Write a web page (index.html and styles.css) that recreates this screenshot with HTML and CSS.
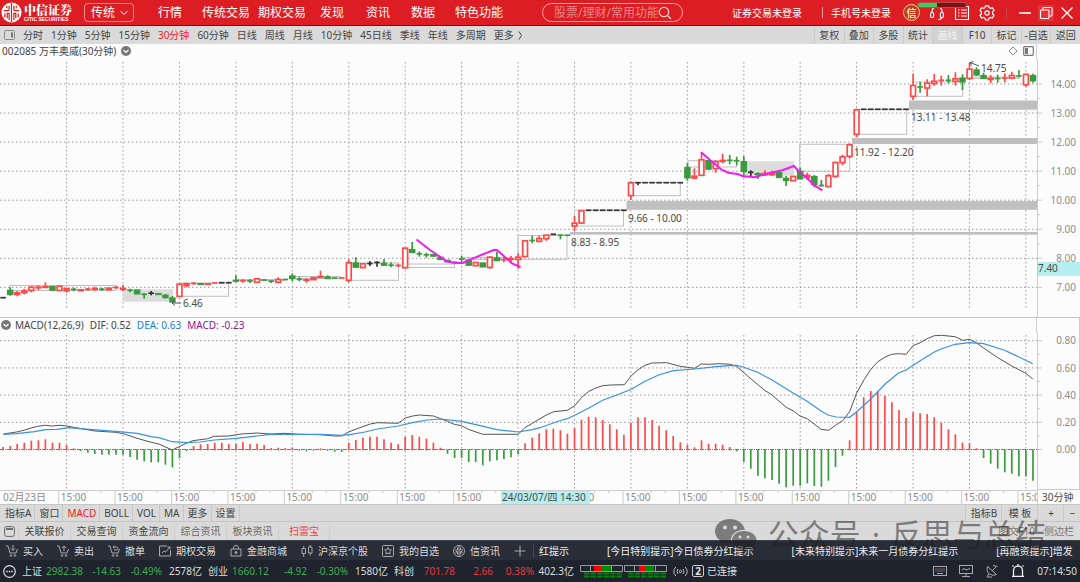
FILE: index.html
```html
<!DOCTYPE html>
<html lang="zh-CN">
<head>
<meta charset="utf-8">
<title>万丰奥威 30分钟</title>
<link rel="stylesheet" href="styles.css">
</head>
<body>
<header class="top">
  <a class="brand" href="#">
    <svg class="brand-mark" viewBox="0 0 22 22" aria-hidden="true"><circle cx="11" cy="11" r="10.5" fill="#fff"/><g fill="none" stroke="#dc1e24" stroke-width="1.3"><path d="M11 1v20M8.5 4v4q0 1-2 1H3M8.500 19v-7h-2v5M13.500 4v4q0 1 2 1H19M13.500 19v-7h2v5M4 12v4M18 12v4M6 4v2.500M16 4v2.500"/></g></svg>
    <span class="brand-text"><b class="brand-cn">中信证券</b><span class="brand-en">CITIC SECURITIES</span></span>
  </a>
  <button class="mode">传统<svg viewBox="0 0 8 6" width="8" height="6"><path d="M.5 1l3.500 3.500L7.500 1" fill="none" stroke="#fff"/></svg></button>
  <nav class="nav">
    <a href="#">行情</a><a href="#">传统交易</a><a href="#">期权交易</a><a href="#">发现</a><a href="#">资讯</a><a href="#">数据</a><a href="#">特色功能</a>
  </nav>
  <label class="search">
    <input type="text" placeholder="股票/理财/常用功能" aria-label="搜索">
    <svg viewBox="0 0 14 14" width="14" height="14"><g fill="none" stroke="#fbd5d5" stroke-width="1.300"><circle cx="6" cy="6" r="4.700"/><path d="M9.500 9.500l3.500 3.500"/></g></svg>
  </label>
  <div class="account">
    <a href="#">证券交易未登录</a><i class="bar"></i><a href="#">手机号未登录</a>
  </div>
  <div class="tools">
    <button class="coin" aria-label="信">信</button>
    <button class="tool" aria-label="客服"><svg viewBox="0 0 16 16"><g fill="none" stroke="#fff" stroke-width="1.200"><path d="M3 8V6.500a5 5 0 0 1 10 0V8M13 12q0 2.500-4 2.500"/><rect x="1.600" y="7.500" width="3" height="5" rx="1.300"/><rect x="11.400" y="7.500" width="3" height="5" rx="1.300"/></g></svg><span class="progress"></span></button>
    <button class="tool" aria-label="列表"><svg viewBox="0 0 16 16"><g fill="none" stroke="#fff" stroke-width="1.100"><path d="M1.500 2.500v12h13v-13h-12"/><path d="M4 5h1.500M7 5h6M4 8h1.500M7 8h6M4 11h1.500M7 11h6"/></g></svg></button>
    <button class="tool" aria-label="设置"><svg viewBox="0 0 16 16"><g fill="none" stroke="#fff" stroke-width="1.200"><path d="M6.500.8h3l.6 1.900 1.300.7 2-.6 1.600 2.600-1.400 1.500v2l1.400 1.500-1.600 2.600-2-.6-1.300.7-.6 1.900h-3l-.6-1.900-1.300-.7-2 .6L1 10.400l1.400-1.500v-2L1 5.400l1.600-2.600 2 .6 1.300-.7z"/><circle cx="8" cy="8" r="2.200"/></g></svg></button>
  </div>
  <i class="bar dim"></i>
  <div class="window">
    <button class="tool" aria-label="最小化"><svg viewBox="0 0 16 16"><path d="M2 8h12" stroke="#fff" stroke-width="1.600"/></svg></button>
    <button class="tool lit" aria-label="还原"><svg viewBox="0 0 16 16"><g fill="none" stroke="#fff" stroke-width="1.100"><rect x="2.500" y="5" width="8.500" height="8.500" rx="1"/><path d="M5 5V3.500q0-1 1-1h7q1 0 1 1V10q0 1-1 1h-2"/></g></svg></button>
    <button class="tool" aria-label="关闭"><svg viewBox="0 0 16 16"><path d="M2.500 2.500l11 11M13.500 2.500l-11 11" stroke="#fff" stroke-width="1.300"/></svg></button>
  </div>
</header>

<div class="periods">
  <svg class="panel-icon" viewBox="0 0 11 10" width="11" height="10"><rect x=".5" y=".5" width="10" height="9" rx="1" fill="none" stroke="#888"/><path d="M7 2.500h2v5H7z" fill="#777"/></svg>
  <button>分时</button><button>1分钟</button><button>5分钟</button><button>15分钟</button><button class="on">30分钟</button><button>60分钟</button><button>日线</button><button>周线</button><button>月线</button><button>10分钟</button><button>45日线</button><button>季线</button><button>年线</button><button>多周期</button><button>更多 <svg viewBox="0 0 5 9" width="5" height="9"><path d="M1 .5l2.500 4L1 8.500" fill="none" stroke="#444"/></svg></button>
  <div class="actions">
    <button>复权</button><button>叠加</button><button>多股</button><button>统计</button><button class="pressed">画线</button><button>F10</button><button>标记</button><button>-自选</button><button>返回</button>
  </div>
</div>

<main class="charts">
  <div class="caption">
    <div class="caption-main">002085 万丰奥威(30分钟)
      <svg viewBox="0 0 10 10" width="10" height="10"><circle cx="5" cy="5" r="5" fill="#777"/><path d="M2.500 4L5 6.500 7.500 4" fill="none" stroke="#fff" stroke-width="1.200"/></svg>
      <svg class="push" viewBox="0 0 10 10" width="10" height="10"><path d="M5 1l4 4-4 4-4-4z" fill="none" stroke="#888"/></svg>
      <svg viewBox="0 0 11 10" width="11" height="10"><rect x=".7" y=".7" width="9.600" height="8.600" rx="1" fill="none" stroke="#777" stroke-width="1.200"/><path d="M2 2h3v6H2z" fill="#777"/></svg>
    </div>
    <div class="caption-side"></div>
  </div>
  <svg class="plot" id="price" viewBox="0 59 1080 259" role="img" aria-label="K线图"></svg>
  <div class="caption">
    <div class="caption-main macd-caption">
      <svg viewBox="0 0 10 10" width="10" height="10"><circle cx="5" cy="5" r="5" fill="#777"/><path d="M2.500 4L5 6.500 7.500 4" fill="none" stroke="#fff" stroke-width="1.200"/></svg>
      <span>MACD(12,26,9)</span><span>DIF: 0.52</span><span class="dea">DEA: 0.63</span><span class="macd">MACD: -0.23</span>
    </div>
    <div class="caption-side boxed"></div>
  </div>
  <svg class="plot" id="macd" viewBox="0 333 1080 157" role="img" aria-label="MACD"></svg>
  <svg class="plot" id="time" viewBox="0 490 1080 14" role="img" aria-label="时间轴"></svg>
</main>

<div class="indicators">
  <button>指标A</button><button>窗口</button><button class="on">MACD</button><button>BOLL</button><button>VOL</button><button>MA</button><button>更多</button><button>设置</button>
  <div class="indicators-end"><button>指标B</button><button>模 板</button><button>+</button><button>−</button></div>
</div>

<div class="news">
  <svg class="news-icon" viewBox="0 0 11 11" width="11" height="11"><rect x=".6" y=".6" width="9.800" height="9.800" rx="2" fill="none" stroke="#666"/><path d="M2 3h7" stroke="#555" stroke-width="1.600"/></svg>
  <button>关联报价</button><button>交易查询</button><button>资金流向</button><button class="soft">综合资讯</button><button class="soft">板块资讯</button><button class="on">扫雷宝</button>
  <div class="news-end"><a href="#">图文F10</a><a href="#">侧边栏</a></div>
</div>

<footer class="bottom">
  <div class="shortcuts">
    <button><svg viewBox="0 0 12 12"><path d="M0 1h2l2 7h6l1.500-4M7 0v5M5 3.500l2 2 2-2"/><circle cx="5" cy="10.500" r=".8"/><circle cx="9" cy="10.500" r=".8"/></svg>买入</button>
    <button><svg viewBox="0 0 12 12"><path d="M0 1h2l2 7h6l1.500-4M7 6V1M5 3l2-2 2 2"/><circle cx="5" cy="10.500" r=".8"/><circle cx="9" cy="10.500" r=".8"/></svg>卖出</button>
    <button><svg viewBox="0 0 12 12"><path d="M0 1h2l2 7h6l1.500-4M5 2h3q2 0 2 1.500T8 5H6M6.500.5L5 2l1.500 1.500"/><circle cx="5" cy="10.500" r=".8"/><circle cx="9" cy="10.500" r=".8"/></svg>撤单</button>
    <button><svg viewBox="0 0 12 12"><path d="M8 1H.5v10h11V5M3 8l2-2 1.500 1L11 2M8.500 2H11v2"/></svg>期权交易</button>
    <button><svg viewBox="0 0 12 12"><path d="M1 4h10v7H1zM3.500 4V2.500q0-2 2.500-2t2.500 2V4"/><circle cx="6" cy="7.500" r="1" fill="#aaa"/></svg>金融商城</button>
    <button><svg viewBox="0 0 12 12"><path d="M1 3.500h3.500v5H1zM2.700 1v2.500M2.700 8.500V12M7.500 2H11v6H7.500zM9.200 0v2M9.200 8v2.500"/></svg>沪深京个股</button>
    <button><svg viewBox="0 0 12 12"><rect x=".5" y=".5" width="11" height="11" rx="1"/><path d="M6 2.500l1 2.200 2.400.3-1.700 1.700.4 2.400L6 8l-2.100 1.100.4-2.400L2.600 5 5 4.700z"/></svg>我的自选</button>
    <button><svg viewBox="0 0 12 12"><circle cx="6" cy="6" r="5.500"/><path d="M6 1v10M4.500 2.500v2.500H2M4.500 9.500v-3H3v2M7.500 2.500v2.500H10M7.500 9.500v-3H9v2"/></svg>信资讯</button>
    <button class="plus" aria-label="添加"><svg viewBox="0 0 12 12"><path d="M6 .5v11M.5 6h11"/></svg></button>
    <div class="ticker"><span>红提示</span><span>[今日特别提示]今日债券分红提示</span><span>[未来特别提示]未来一月债券分红提示</span><span>[再融资提示]增发</span></div>
  </div>
  <div class="status">
    <svg class="status-menu" viewBox="0 0 13 13" width="13" height="13"><circle cx="6.500" cy="6.500" r="5.800" fill="none" stroke="#ddd" stroke-width="1.200"/><path d="M3.300 6.500h1.500M5.800 6.500h1.500M8.300 6.500h1.500" stroke="#ddd" stroke-width="1.500"/></svg>
    <div class="index down"><b>上证</b><span>2982.38</span><span>-14.63</span><span>-0.49%</span><em>2578亿</em></div>
    <div class="index down"><b>创业</b><span>1660.12</span><span>-4.92</span><span>-0.30%</span><em>1580亿</em></div>
    <div class="index up"><b>科创</b><span>701.78</span><span>2.66</span><span>0.38%</span><em>402.3亿</em></div>
    <svg class="meter" viewBox="0 0 87 13" width="87" height="13" id="meter"></svg>
    <svg viewBox="0 0 15 11" width="15" height="11"><g fill="none" stroke="#bbb"><circle cx="7.500" cy="5.500" r="1.200"/><path d="M5 3q-2 2.500 0 5M10 3q2 2.500 0 5M2.800 1q-4 4.500 0 9M12.200 1q4 4.500 0 9"/></g></svg>
    <span class="badge">2</span><span>已连接</span>
    <div class="tray">
      <svg viewBox="0 0 14 14" width="14" height="14"><g fill="none" stroke="#aaa"><rect x=".5" y="2.500" width="13" height="9"/><path d="M2.500 5h9M2.500 7h9" stroke-dasharray="1 1"/><path d="M4 9.500h6"/></g></svg>
      <svg viewBox="0 0 14 14" width="14" height="14"><g fill="none" stroke="#aaa"><rect x=".5" y="1.500" width="13" height="8"/><path d="M3 6l2-1.500 2 1.500 4-1.500M7 9.500v3M3 12.500h8"/></g></svg>
      <svg viewBox="0 0 14 14" width="14" height="14"><g fill="none" stroke="#aaa"><path d="M2.500 2.500q-1.500 5 2 7.500t7 .5zM4 9.500l-2 3.500h5M7 7l4-4M8 1.500l4.500 1"/></g></svg>
      <svg viewBox="0 0 14 14" width="14" height="14"><g fill="none" stroke="#eee" stroke-width="1.300"><path d="M2.500 12V6.500a4.500 4.500 0 0 1 9 0V12M1 12.300h12M7 0v2M1.500 1.500l1 1M12.500 1.500l-1 1"/></g></svg>
      <time>07:14:50</time>
    </div>
  </div>
</footer>

<div class="watermark">
  <svg viewBox="0 0 42 31" width="42" height="31"><path fill="currentColor" fill-rule="evenodd" d="M15 0C6.500 0 0 5.500 0 12.200 0 16 2 19.300 5.300 21.600L4 26l5-2.600c2 .6 4.200.9 6.500.8C15 16 21 10.600 30 10.800 28.500 4.500 22.500 0 15 0zM10 6.500a2 2 0 1 1 0 4 2 2 0 0 1 0-4zm10 0a2 2 0 1 1 0 4 2 2 0 0 1 0-4z"/><path fill="currentColor" fill-rule="evenodd" d="M29 12c-7 0-12 4.200-12 9.500S22 31 29 31c1.500 0 3-.2 4.500-.7L37.500 31l-1-2.500c3-1.800 5-4.200 5-7C41.500 16.200 36 12 29 12zm-4 4.500a1.500 1.500 0 1 1 0 3 1.500 1.500 0 0 1 0-3zm8 0a1.500 1.500 0 1 1 0 3 1.500 1.500 0 0 1 0-3z"/></svg>
  <span>公众号</span><span>·</span><span>反思与总结</span>
</div>
<script src="chart.js"></script>
</body>
</html>
```
FILE: styles.css
```css
* { box-sizing: border-box; }
body {
  margin: 0;
  min-height: 100vh;
  position: relative;
  overflow-x: hidden;
  background: #fcfcfc;
  color: #444;
  font: 10px/14px "Noto Sans", "Noto Sans CJK SC", sans-serif;
}
button {
  margin: 0;
  padding: 0;
  border: 0;
  background: none;
  color: inherit;
  font: inherit;
  white-space: nowrap;
}
a { color: inherit; text-decoration: none; white-space: nowrap; }
svg { display: block; flex: none; }

/* header */
.top {
  display: flex;
  align-items: center;
  height: 26px;
  background: #dc1e24;
  border-bottom: 1px solid #5a1b1e;
  color: #fff;
}
.brand { display: flex; align-items: center; gap: 2px; width: 84px; padding-left: 1px; }
.brand-mark { width: 21px; height: 21px; }
.brand-text { display: flex; flex-direction: column; }
.brand-cn { font: 900 12px/13px "Noto Serif CJK SC", "Noto Sans CJK SC", serif; }
.brand-en { font: bold 5px/6px "Liberation Sans", sans-serif; }
.mode {
  display: flex;
  align-items: center;
  gap: 5px;
  height: 19px;
  width: 50px;
  padding-left: 6px;
  border: 1px solid #f08a8c;
  border-radius: 4px;
  font-size: 12px;
}
.nav {
  display: grid;
  grid-template-columns: 44px 56px 62px 46px 45px 44px 48px;
  margin-left: 24px;
  font-size: 12px;
}
.search {
  display: flex;
  align-items: center;
  width: 141px;
  height: 19px;
  margin-left: 39px;
  padding: 0 10px 0 11px;
  border: 1px solid #f6a5a6;
  border-radius: 10px;
}
.search input {
  flex: 1;
  min-width: 0;
  padding: 0;
  border: 0;
  outline: 0;
  background: none;
  color: #fff;
  font: inherit;
  font-size: 12px;
}
.search input::placeholder { color: #ee8586; opacity: 1; }
.account { display: flex; align-items: center; margin-left: auto; }
.bar { width: 1px; height: 11px; margin: 0 8px 0 20px; background: #f0a0a0; }
.tools { display: flex; align-items: center; gap: 9px; padding-left: 12px; }
.window { display: flex; align-items: center; gap: 5px; padding-right: 5px; }
.coin {
  width: 17px;
  height: 17px;
  border: 1px solid #f5d08a;
  border-radius: 50%;
  background: #c03a20;
  color: #ffdf9c;
  font-weight: bold;
  line-height: 14px;
}
.tool { position: relative; width: 16px; height: 16px; }
.lit { background: #e23439; }
.bar.dim { height: 12px; margin: 0 10px 0 11px; background: #c9474b; }
.progress {
  position: absolute;
  left: -12px;
  top: -3px;
  z-index: 1;
  width: 50px;
  height: 6px;
  border: 1px solid #b05055;
  border-radius: 3px;
  background: linear-gradient(90deg, #41c95c 40%, #7f1014 40%);
}

/* period selector */
.periods { display: flex; align-items: center; gap: 8px; height: 18px; padding-left: 4px; background: #dadada; }
.periods > button { display: flex; align-items: center; gap: 4px; }
.on { color: #f02020; }
.actions { display: grid; grid-template-columns: repeat(9, 1fr); width: 266px; height: 18px; margin-left: auto; }
.actions button { border-left: 1px solid #cacaca; }
.pressed { color: #f4f4f4; background: #d2d2d2; }

/* charts */
.caption { display: flex; height: 15px; }
.caption-main { flex: 1; display: flex; align-items: center; gap: 5px; padding: 0 2px 2px; border-right: 1px solid #cfcfcf; }
.push { margin-left: auto; }
.caption-side { width: 4%; }
.macd-caption { gap: 6px; padding-left: 1px; }
.macd-caption svg { margin-right: -2px; }
.boxed { border-right: 1px solid #ccc; }
.dea { color: #2080d8; }
.macd { color: #8c1a8c; }
.plot { width: 100%; height: auto; }
.plot text { font-size: 10px; fill: #4a4a4a; }
.plot .axis-text { fill: #8c8c8c; }
.plot .grid { stroke: #999; stroke-dasharray: 1.500 2.500; }
.plot .edge { stroke: #ccc; fill: none; }
.plot .rule { stroke: #c4c4c4; stroke-width: 2; }
.plot .day { stroke: #c0c0c0; fill: none; }
.plot .shade { fill: #dcdcdc; }
.plot .band { fill: #bfbfbf; }
.plot .stroke { stroke: #f01cf0; stroke-width: 2; fill: none; }
.plot .r { stroke: #ff4a4a; fill: #ff4a4a; }
.plot .h { stroke: #ff4a4a; fill: #fcfcfc; }
.plot .g { stroke: #399b3d; fill: #399b3d; }
.plot .k { stroke: #333; fill: #333; }
.plot .candle { stroke-width: 1.7; }
.plot .dif-line { stroke: #555; fill: none; }
.plot .dea-line { stroke: #3a93e0; stroke-width: 1.2; fill: none; }
.plot .tag { fill: #b4eeee; }

/* tab strips */
.indicators, .news { display: flex; background: #dadada; }
.indicators { height: 17px; padding-left: 1px; border-top: 1px solid #c6c6c6; line-height: 13px; }
.indicators button { padding: 0 3px 0 4px; border-right: 1px solid #c8c8c8; }
.indicators-end { display: grid; grid-template-columns: 36px 36px 26px 17px; margin-left: auto; }
.indicators-end button { border: 0; border-left: 1px solid #c8c8c8; }
.news { height: 19px; align-items: center; border-top: 1px solid #c4c4c4; }
.news-icon { margin: 0 3px 0 4px; }
.news button { width: 52px; height: 18px; border-left: 1px solid #cecece; }
.news button.on { border-right: 1px solid #cecece; color: #f04040; }
.news .soft { color: #666; }
.news-end { display: flex; gap: 9px; margin-left: auto; padding-right: 6px; color: #777; }

/* dark footer */
.bottom { color: #ddd; background: #1f232d; }
.shortcuts { display: flex; align-items: center; gap: 14px; height: 20px; padding-left: 6px; overflow: hidden; background: #282d38; border-top: 1px solid #3a3f48; }
.shortcuts button { display: flex; align-items: center; gap: 5px; }
.shortcuts svg { width: 12px; height: 12px; fill: none; stroke: #aaa; }
.ticker { display: flex; gap: 38px; flex: 1; min-width: 0; overflow: hidden; padding-left: 5px; margin-left: -7px; border-left: 1px solid #454a54; white-space: nowrap; color: #eee; }
.status { display: flex; align-items: center; height: 22px; padding-left: 3px; white-space: nowrap; }
.status-menu { margin-right: 6px; }
.index { display: grid; grid-template-columns: 21px 40px 38px 41px 40px; margin-right: 6px; text-align: right; }
.index b { font-weight: normal; text-align: left; }
.index em { font-style: normal; }
.down span { color: #3fae50; }
.up span { color: #e03c3c; }
.meter { margin-right: 6px; }
.badge { width: 12px; height: 12px; margin: 0 3px 0 4px; border: 1px solid #ccc; border-radius: 2px; font: bold 10px/10px "Noto Sans", sans-serif; text-align: center; }
.tray { display: flex; align-items: center; gap: 12px; margin-left: auto; padding-right: 3px; }

/* floating account mark */
.watermark {
  position: absolute;
  right: 34px;
  bottom: 28px;
  display: flex;
  align-items: center;
  gap: 11px;
  color: rgba(30, 30, 30, .5);
  font-size: 31px;
  line-height: 40px;
  white-space: nowrap;
  pointer-events: none;
}
```
FILE: chart.js
```js
const barX = i => 66.6 + 7.054 * (i - 9);
const dayX = k => 66.6 + 56.43 * k;
const f = n => n.toFixed(1);
const line = (c, x1, y1, x2, y2) => `<line class="${c}" x1="${f(x1)}" y1="${f(y1)}" x2="${f(x2)}" y2="${f(y2)}"/>`;
const rect = (c, x, y, w, h) => `<rect class="${c}" x="${f(x)}" y="${f(y)}" width="${f(w)}" height="${f(h)}"/>`;
const text = (c, x, y, s, a = 'start') => `<text class="${c}" x="${f(x)}" y="${f(y)}" text-anchor="${a}">${s}</text>`;

// Candles: kind, body top, body bottom, optional wick top and bottom.
// Kinds: r red, h hollow red, g green, k black. Units are thirds of a pixel below each run's base.
const runs = [
  [230, `k203,203 g180,193,172,197 r187,193,183,199 h181,188,176,193 h170,181,168,187 r170,173,166,180 r169,172,157,175 g169,180 h167,181 r175,182,174,188
  g178,178,173,184 r178,182 r177,178,174,182 r175,178,170,182 g177,178,174,182 r173,179 r172,173,168,176 r175,178,165,184 g180,181,176,187 g179,191
  g192,194,190,206 k189,190,183,196 g190,193 g195,202,192,206 g203,215,198,218 h161,199 r160,167,158,172 r160,161,156,164 g160,163 r160,163
  r158,160 k158,158 k158,158 g150,153,136,157 r152,153,148,158 g152,154,147,159 h145,157 g149,151 g153,154,151,159 h147,157,142,158
  g148,149 g137,145,130,154 g147,149,140,154 r148,151,145,158 r142,149 r138,142,122,144 g140,145,136,147 g143,145 r143,145`],
  [170, `h277,331,268,337 g278,291,262,292 h280,293 k280,281,273,288 k277,278,274,290 g279,285,267,287 g285,286,277,292 r286,287,281,291 h233,293,232,296 g238,247,216,248 g251,252,244,260
  g254,255,248,263 g253,258 g261,268 g270,275 g276,278 g266,268,258,277 g270,285,268,288 h276,287 g278,290 h260,292,258,297
  g263,271,245,272 r268,270,262,277 r265,268,258,275 h260,268,250,296 h211,260 g211,212,197,220 h204,214,197,217 h194,206,194,212 k193,193 g195,196,193,208
  g195,196 h158,168,138,183 h121,159,120,161 k121,121 k121,121 k121,121 k121,121 k121,121 k121,121 h37,77,34,90
  k38,38,38,46 k38,38 k38,38 k38,38 k38,38 k38,38 k38,38`],
  [60, `g322,353,310,362 h347,354,325,358 h298,346,277,346 g301,327 h304,326,300,338 r300,304,281,310 g300,302,285,313 g301,303,290,316
  g304,334,288,348 k336,338,331,350 g340,344,337,357 r339,344,331,347 r338,344,332,347 g337,352 g354,361,348,378 h348,362 g333,356,323,356 r345,352,338,360
  g349,373,345,382 g376,377,360,380 h346,380,342,380 h306,349,305,354 h289,308,284,316 h253,289,250,295 h148,223,146,232 k148,148 k148,148 k148,148
  k148,148 k148,148 k148,148 k148,148 h75,109,41,120 g80,82,65,98 h68,84,58,109 h62,70,42,77 r60,62,47,77 g60,62,45,70
  h55,64,37,77 g53,65,43,90 h26,55,8,60 g29,44,22,48 g46,55,38,57 r53,58,45,70 g55,56,44,68 r53,55,40,67 h45,54,35,58 g47,49,31,52
  h42,74,40,80 g46,62,41,68`]
];

function candles() {
  let i = 0, out = '';
  for (const [base, src] of runs) {
    for (const c of src.trim().split(/\s+/)) {
      const v = c.slice(1).split(',').map(n => base + n / 3);
      const [a, b, hi = a, lo = b] = v, x = barX(i++), cls = 'candle ' + c[0];
      out += line(cls, x, hi, x, a) + line(cls, x, b, x, lo);
      out += b - a < 1 ? line(cls, x - 2.8, (a + b) / 2, x + 2.8, (a + b) / 2) : rect(cls, x - 2.4, a + .5, 4.8, b - a - .5);
    }
  }
  return out;
}

const days = [[10, 285.5, 106, 5], [180, 283, 48.5, 13.3], [236, 279.5, 49, 1], [292, 276.5, 48, 2], [348.5, 263, 50, 17.3], [405, 264, 49.5, 3.5],
  [461.5, 257.5, 49.5, 2], [518, 235.5, 49, 23.8], [574.5, 210, 49, 16], [631, 182.5, 49.3, 13.1], [688, 160.7, 48.7, 6.3], [799.7, 144.3, 50, 27],
  [856.7, 109.3, 50, 25], [913, 82, 49.7, 14.3], [969.7, 77, 49.6, 1.5]];

function price() {
  let s = '';
  for (let k = 0; k < 18; k++) s += line('grid', dayX(k), 62, dayX(k), 308);
  for (let p = 7; p <= 14; p++) {
    const y = 84 + (14 - p) * 29.05;
    s += line('grid', 0, y, 1037, y) + line('edge', 1037, y, 1042, y) + text('axis-text', 1076, y + 3.6, p.toFixed(2), 'end');
    if (p > 7) s += line('edge', 1037, y + 14.5, 1040, y + 14.5);
  }
  s += rect('shade', 123, 289.3, 50, 12.4) + rect('shade', 743.7, 161.3, 50.3, 14.4);
  s += days.map(d => rect('day', ...d)).join('');
  s += rect('band', 909, 100.5, 128, 9.2) + rect('band', 852, 138, 185, 6) + rect('band', 626.5, 201, 410.5, 8.8) + rect('band', 570, 232, 467, 2.6);
  s += candles();
  s += '<polyline class="stroke" points="416.500,239.500 430,250 446.700,261.300 455,263 462.700,263 473,258.300 494.300,249.700 497.300,250.300 512,263.300 520.500,267"/>';
  s += '<polyline class="stroke" points="701,152.300 710,160 721.700,169.700 728.300,172.700 737.300,174 743.300,176.300 755,177.300 766.700,173.700 783.300,170 793.700,166 800,172.300 808.300,179 813.300,184.700 822.300,190.300"/>';
  s += text('', 183, 307, '6.46') + text('', 981, 71.5, '14.75') + text('', 911, 121, '13.11 - 13.48') + text('', 854, 156, '11.92 - 12.20')
    + text('', 628, 221.500, '9.66 - 10.00') + text('', 571, 246, '8.83 - 8.95');
  s += '<path class="dif-line" d="M181 303h-9m3-2.500l-3 2.500 3 2.500M979 66l-9-3.500m3.500-1l-3.500 1 1.500 3"/>';
  s += line('edge', 1037.5, 59, 1037.5, 318) + line('rule', 0, 318, 1080, 318);
  s += rect('tag', 1038, 262, 42, 14) + text('', 1038, 272, '7.40');
  document.getElementById('price').innerHTML = s;
}

// Histogram heights, thirds of a pixel; negative values hang below zero.
const hist = [9, 12, 18, 22, 28, 29, 32, 22, 22, 15, 5, -3, -8, -12, -14, -14, -14, -14, -21, -29, -34, -37, -37, -44, -52, -24, -3,
  12, 17, 18, 22, 22, 18, 18, 23, 18, 19, 15, 6, 7, 6, 7, -2, -4, -2, 5, -2, -5, -6, 22, 30, 37, 40, 40, 32, 22, 17, 40, 45, 40, 34, 22, 7,
  -11, -24, -24, -36, -36, -46, -34, -31, -27, -22, -13, 20, 37, 50, 62, 64, 59, 49, 65, 91, 100, 98, 90, 77, 62, 46, 82, 98, 98, 90, 73, 59, 42, 23, 16, 8,
  29, 19, 19, 16, 9, -4, -36, -56, -77, -85, -90, -101, -112, -107, -107, -100, -108, -110, -92, -51, -17, 29, 115, 158, 177, 177, 163, 143, 120, 96,
  113, 110, 108, 98, 82, 62, 47, 22, 21, 5, -24, -41, -56, -67, -71, -79, -79, -92];

const dif = [[0, 400, '10,102 48,96 72,90 90,84 109,79 132,76 150,78 175,76 194,78 236,86 275,93 336,97 358,101 398,115 439,127 461,132 500,150 541,130 560,122 603,116 622,109 664,108 700,102 746,99 787,102 827,100 868,103 930,104 973,108 992,108 1012,96 1040,85 1075,72 1096,68 1156,70 1177,54 1198,48 1218,45 1259,48 1299,64 1319,73 1340,77 1360,88 1382,96 1402,103 1505,103 1524,83 1546,70'],
  [540, 310, '0,326 20,314 40,305 79,301 101,287 121,262 142,244 162,234 182,227 205,225 245,224 265,197 285,179 305,166 325,159 368,158 407,169 449,175 468,162 490,163 520,161 552,163 571,169 613,207 654,242 674,255 715,292 736,303 755,318 776,326 816,358 838,361 858,346 880,331 899,305 919,250 941,209 961,177 980,156 1002,141 1021,133 1041,131 1063,133 1083,107 1104,98 1124,86 1145,77 1166,76 1205,80 1228,91 1247,88 1267,98 1288,114 1328,142 1370,168 1411,190 1431,207']];
const dea = [[0, 400, '10,103 48,101 100,95 132,89 165,88 200,83 260,88 336,94 398,100 439,110 461,113 500,125 541,128 581,126 622,120 686,115 746,108 787,103 930,103 992,106 1020,103 1060,96 1096,87 1156,78 1198,68 1240,60 1280,57 1340,64 1382,74 1443,89 1505,96 1546,89'],
  [540, 310, '0,353 55,333 79,326 101,316 142,294 182,271 223,255 265,238 305,214 346,194 387,182 450,177 510,170 552,167 571,166 590,171 632,187 674,210 736,250 776,274 816,303 838,316 860,321 899,322 919,306 961,266 1002,222 1041,189 1063,180 1104,152 1145,126 1166,116 1205,103 1247,98 1288,101 1349,121 1391,141 1431,161']];
const curve = (cls, parts) => `<polyline class="${cls}" points="${parts.map(([x0, y0, s]) => s.split(' ').map(p => {
  const [x, y] = p.split(',');
  return f(x0 + x / 2.9037) + ',' + f(y0 + y / 3);
}).join(' ')).join(' ')}"/>`;

function macd() {
  let s = '';
  for (let k = 0; k < 18; k++) s += line('grid', dayX(k), 335, dayX(k), 490);
  [0.8, 0.6, 0.4, 0.2, 0].forEach((v, n) => {
    const y = 340.7 + n * 27.2;
    s += `<line class="grid" x1="0" x2="1037" y1="${f(y)}" y2="${f(y)}"${v ? '' : ' style="stroke:#777;stroke-dasharray:4 1 1 1"'}/>`;
    s += line('edge', 1037, y, 1042, y) + text('axis-text', 1076, y + 3.6, v.toFixed(2), 'end');
    if (v) s += line('edge', 1037, y + 13.6, 1040, y + 13.6);
  });
  hist.forEach((h, i) => { s += line('candle ' + (h > 0 ? 'r' : 'g'), barX(i), h > 0 ? 450.3 : 449.5, barX(i), 450 - h / 3); });
  s += curve('dif-line', dif) + curve('dea-line', dea);
  s += line('edge', 1037.5, 333, 1037.5, 490) + line('edge', 1079.5, 333, 1079.5, 490) + line('edge', 1037, 489.5, 1080, 489.5);
  document.getElementById('macd').innerHTML = s;
}

// The highlighted cursor time covers the label of the ninth day.
const cursorDay = 8;

function time() {
  let s = line('edge', 0, 490.5, 1037, 490.5) + text('axis-text', 3, 501, '02月23日');
  for (let k = 0; k < 18; k++) {
    const x = 58.7 + 56.43 * k;
    s += line('edge', x, 490, x, 504) + line('edge', x + 28, 490, x + 28, 493) + line('edge', x + 42, 490, x + 42, 493);
    if (k !== cursorDay) s += text('axis-text', x + 2, 501, '15:00');
  }
  s += rect('tag', 501, 491, 89, 13) + text('', 502, 501, '24/03/07/四 14:30');
  s += '<rect x="1037" y="490" width="43" height="14" fill="#fcfcfc"/>' + line('edge', 1037.5, 490, 1037.5, 504) + text('', 1042, 501, '30分钟');
  document.getElementById('time').innerHTML = s;
}

function meter() {
  let s = '';
  for (const [x, a, b] of [[0, 14, 22], [44, 15, 21]]) {
    s += `<rect x="${x + a}" y="1" width="8" height="5" fill="#f00"/><rect x="${x + b}" y="1" width="9" height="5" fill="#080"/>`;
    s += `<path d="M${x + .5} .500h42v6h-42zM${x + 10.500} .500v6M${x + 31.500} .500v6" fill="none" stroke="#999"/>`;
    for (let n = 0; n < 6; n++) s += `<path d="M${x + 4 + n * 6.500} 8.500h5.500M${x + 4 + n * 6.500} 11.500h5.500" stroke="#080" stroke-width="2"/>`;
  }
  document.getElementById('meter').innerHTML = s;
}

price();
macd();
time();
meter();
```
